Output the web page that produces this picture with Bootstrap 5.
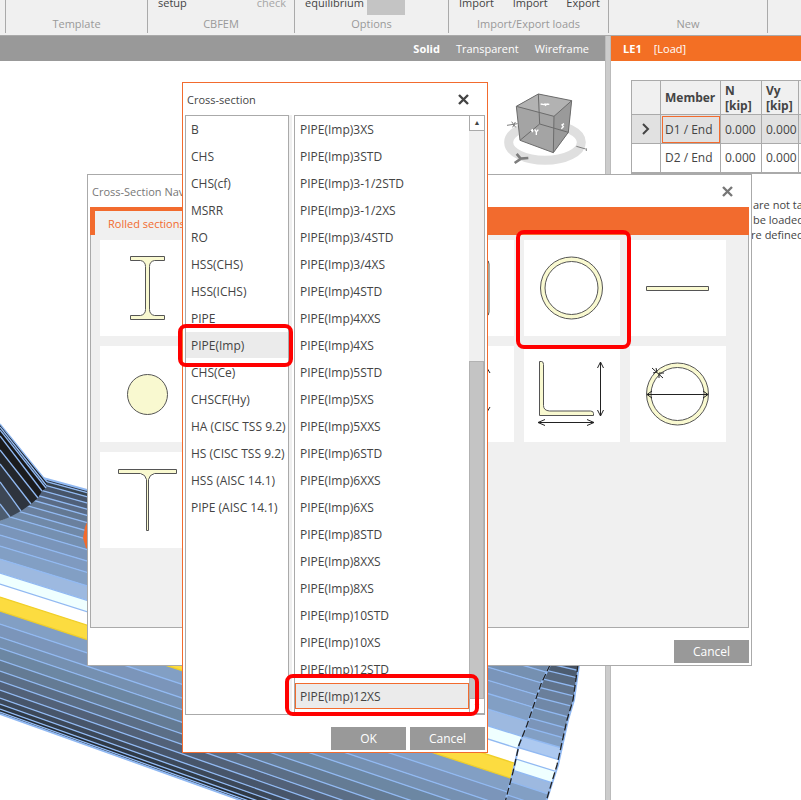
<!DOCTYPE html>
<html lang="en">
<head>
<meta charset="utf-8">
<meta name="viewport" content="width=device-width, initial-scale=1">
<title>Connection – Cross-section</title>
<link href="https://cdn.jsdelivr.net/npm/bootstrap@5.3.0/dist/css/bootstrap.min.css" rel="stylesheet">
<style>
:root{--line:#aaa;--accent:#f26b2e;--panel:#f0f0f0;--ink:#444}
body{font:12px/15px "Open Sans","Noto Sans",sans-serif;color:var(--ink);background:#fff}
button{font:inherit;color:inherit;border:0;background:none;padding:0}
svg{display:block}
.ribbon{display:grid;grid-template-columns:6fr 142fr 147fr 154fr 160fr 159fr 33fr;grid-template-rows:33px;background:var(--panel);border-bottom:1px solid var(--line);height:36px;overflow:hidden;font-size:11px}
.ribbon-group{height:33px;border-right:1px solid var(--line);display:flex;flex-direction:column;justify-content:flex-end;padding-bottom:2px;white-space:nowrap}
.ribbon-group:last-child{border:0}
.ribbon-group h2{font-size:11px;line-height:15px;margin:0;text-align:center;color:#999;font-weight:400}
.ribbon-tools{display:flex;align-items:flex-end;padding:0 8px 0 10px;margin-bottom:6px;line-height:15px}
.ribbon-tools .swatch{width:38px;height:20px;background:#c4c4c4;margin-left:3px;margin-bottom:-5px}
.ribbon-off{color:#a6a6a6}
.pane-bar{height:25px;background:#999;color:#fff;font-size:11px}
.load-bar{background:#f36f24}
.splitter{width:6px;background:#ccc;border-left:1px solid #bbb;border-right:1px solid #bbb}
.side-pane{width:190px}
.load-table{margin:19px 0 0 20px;width:198px;table-layout:fixed;border-collapse:collapse;white-space:nowrap}
.load-table th,.load-table td{border:1px solid var(--line);padding:0 4px;height:29px}
.load-table thead th{background:var(--panel);height:34px}
.load-table tbody tr:first-child{background:#e1e1e1}
.load-table tr:last-child td{border-bottom-width:2px}
.load-table .cell-on{outline:1px solid var(--accent);outline-offset:-2px}
.load-notes{margin-top:23px;padding-left:142px;white-space:nowrap;font-size:11px}
.load-notes p{margin:0}
.load-notes p:last-child{text-indent:-8px}
.win{position:absolute;background:#fff;border:1px solid var(--line)}
.win-sections{left:87px;top:174px;width:665px;padding:0 2px 2px}
.win-pick{left:182px;top:82px;width:306px;border-color:var(--accent);padding:0 2px 2px}
.win-title{height:32px;padding:0 16px 0 2px}
.win-sections .win-title{color:#777}
.win h1{font-size:11px;line-height:15px;font-weight:400;margin:0}
.tab-strip{background:var(--accent);height:28px;padding:4px 0 0 5px;font-size:11px}
.tab-strip button{background:var(--panel);color:var(--accent);height:24px;padding:0 13px}
.tile-panel{background:var(--panel);border:1px solid var(--line);border-top:0;height:393px;padding:5px 9px;display:grid;grid-template-columns:repeat(6,96px);grid-auto-rows:96px;gap:10px}
.tile{background:#fff}
.tile svg{fill:#f9f9d0;stroke:#555;stroke-width:1}
.tile .dim{fill:none;stroke:#222}
.cmd{background:#999;color:#fff;width:75px;height:23px;font-size:12px}
.lists{gap:5px;background:linear-gradient(var(--panel),var(--panel)) 104px 0/3px 100% no-repeat}
.pick-box{border:1px solid var(--line);height:600px;background:#fff}
.pick-series{width:104px}
.pick-box .list-group-item{border:1px solid transparent;padding:0 4px;height:26px;margin-bottom:1px;color:var(--ink);background:none;text-align:left;white-space:nowrap;width:100%}
.pick-box .list-group-item.on{background:#ebebeb}
.pick-size .list-group-item.on{border-color:var(--accent)}
.bar-track{width:15px;background:var(--panel)}
.bar-track button{height:15px;background:#fff;border:1px solid var(--line);border-width:0 0 1px 1px;font-size:7px;line-height:10px}
.bar-thumb{height:338px;background:#c4c4c4;border:1px solid #b2b2b2}
.mark-box{position:absolute;border:4px solid #f00;border-radius:8px;pointer-events:none}
.mark-series{left:178px;top:324px;width:115px;height:43px}
.mark-tile{left:516px;top:230px;width:115px;height:119px}
.mark-size{left:285px;top:674px;width:194px;height:42px}
</style>
<script src="https://cdn.jsdelivr.net/npm/bootstrap@5.3.0/dist/js/bootstrap.bundle.min.js"></script>
</head>
<body class="position-relative vh-100 overflow-hidden d-flex flex-column">
<header class="ribbon flex-shrink-0">
  <div class="ribbon-group"></div>
  <div class="ribbon-group"><h2>Template</h2></div>
  <div class="ribbon-group"><div class="ribbon-tools justify-content-between"><button>setup</button><button class="ribbon-off">check</button></div><h2>CBFEM</h2></div>
  <div class="ribbon-group"><div class="ribbon-tools"><button>equilibrium</button><span class="swatch"></span></div><h2>Options</h2></div>
  <div class="ribbon-group"><div class="ribbon-tools justify-content-between"><button>Import</button><button>Import</button><button>Export</button></div><h2>Import/Export loads</h2></div>
  <div class="ribbon-group"><h2>New</h2></div>
  <div class="ribbon-group"></div>
</header>
<main class="d-flex flex-grow-1 overflow-hidden">
  <section class="flex-grow-1 overflow-hidden">
    <nav class="pane-bar d-flex justify-content-end align-items-center gap-3 pe-3">
      <button class="fw-bold">Solid</button><button>Transparent</button><button>Wireframe</button>
    </nav>
    <svg id="scene" class="w-100" viewBox="0 61 605 739" role="img" aria-label="3D model">
      <defs>
        <clipPath id="body"><path d="M46 487 43 478 87 490 560 620 550 665 541 684 527 725 519 745 513 772 503 810 268 810 190 782 0 714V521L10 516Z"/></clipPath>
        <clipPath id="rim"><path d="M560 620H587L579 665 574 700 568 720 558 765 545 805H503L513 772 519 745 527 725 541 684 550 665Z"/></clipPath>
      </defs>
      <g id="bodyBands" clip-path="url(#body)"></g>
      <g id="rimBands" clip-path="url(#rim)"></g>
      <g fill="none">
        <path d="M43 478 87 490M0 714 190 782 268 810M579 665 574 700 568 720 558 765 545 805" stroke="#91b9f2" stroke-width="2"/>
        <path d="M550 665 541 684 527 725 519 745 513 772 503 810" stroke="#91b9f2" stroke-width="2"/>
        <path d="M550 665 541 684 527 725 519 745 513 772 503 810M578 665 573 700 567 720 557 765 545 805" stroke="#222" stroke-width="1.3" stroke-dasharray="7 3"/>
      </g>
      <g id="branch"></g>
      <path d="M88 520 85 527 83 538 86 548 88 549Z" fill="#f26b2e"/>
      <g transform="translate(495 80) scale(.3333)">
        <ellipse cx="150" cy="187" rx="109" ry="54" fill="none" stroke="#dfdfdf" stroke-width="27"/>
        <path d="M130 42 230 62 220 157 175 218 75 181 64 79Z" fill="#a4a4a4"/>
        <path d="M130 42 230 62 177 109 64 79Z" fill="#b2b2b2"/>
        <path d="M177 109 230 62 220 157 175 218Z" fill="#9a9a9a"/>
        <path d="M130 42 230 62 220 157 175 218 75 181 64 79ZM64 79 177 109 230 62M177 109 175 218M130 42 134 132 75 181M134 132 220 157" fill="none" stroke="#6b6b6b" stroke-width="3"/>
        <path d="M137 72l10 2 5-3M150 77l6-5 7 1M112 147v10M108 151l7 2M119 148l5 8 6-7M124 156v9M207 131l-6 4 4 5-6 6" fill="none" stroke="#fff" stroke-width="4"/>
        <path d="M36 136 68 131M50 125 62 142M61 126 53 142" stroke="#7d7d7d" stroke-width="3"/>
        <path d="M65 222 77 236 100 234M78 236 59 249" fill="none" stroke="#7d7d7d" stroke-width="8"/>
        <path d="M244 199 272 207M274 205v8" stroke="#7d7d7d" stroke-width="3"/>
      </g>
    </svg>
  </section>
  <div class="splitter flex-shrink-0"></div>
  <aside class="side-pane flex-shrink-0 overflow-hidden">
    <div class="pane-bar load-bar d-flex align-items-center gap-2 ps-2"><b class="ms-1">LE1</b><span class="ms-1">[Load]</span></div>
    <table class="load-table">
      <colgroup><col style="width:29px"><col style="width:60px"><col style="width:41px"><col style="width:37px"><col></colgroup>
      <thead><tr><th></th><th>Member</th><th>N<br>[kip]</th><th>Vy<br>[kip]</th><th></th></tr></thead>
      <tbody>
        <tr><td><svg class="mx-auto" width="8" height="12" fill="none" stroke="#444" stroke-width="2"><path d="M1 1 6 6 1 11"/></svg></td><td class="cell-on">D1 / End</td><td>0.000</td><td>0.000</td><td></td></tr>
        <tr><td></td><td>D2 / End</td><td>0.000</td><td>0.000</td><td></td></tr>
      </tbody>
    </table>
    <div class="load-notes"><p>are not taken</p><p>be loaded</p><p>are defined</p></div>
  </aside>
</main>

<section class="win win-sections">
  <div class="win-title d-flex justify-content-between align-items-center"><h1>Cross-Section Navigator</h1>
    <button aria-label="Close"><svg width="11" height="11" stroke="#777" stroke-width="2.4"><path d="M1 1 10 10M10 1 1 10"/></svg></button></div>
  <div class="tab-strip"><button>Rolled sections</button></div>
  <div class="tile-panel">
    <button class="tile" aria-label="I section"><svg width="96" height="96"><path d="M30.500 16.500h34v4h-10q-5 1-5 6v43q0 5 5 6h10v4h-34v-4h10q5-1 5-6v-43q0-5-5-6h-10Z" transform="translate(0 0)"/></svg></button>
    <button class="tile" aria-label="Channel"></button>
    <button class="tile" aria-label="Angle"></button>
    <button class="tile" aria-label="Rectangular tube"><svg width="96" height="96"><path fill-rule="evenodd" d="M28 20H68Q71 20 71 24V72Q71 76 68 76H28Q25 76 25 72V24Q25 20 28 20ZM30 24H66V72H30Z"/></svg></button>
    <button class="tile" aria-label="Pipe"><svg width="96" height="96"><circle cx="47.500" cy="48" r="31"/><circle cx="47.500" cy="48" r="26.500" fill="#fff"/></svg></button>
    <button class="tile" aria-label="Plate"><svg width="96" height="96"><path d="M16.500 46.500h62v4h-62Z" fill="#f9f9d0"/></svg></button>
    <button class="tile" aria-label="Round bar"><svg width="96" height="96"><circle cx="47.500" cy="48.500" r="20"/></svg></button>
    <button class="tile" aria-label="Rectangular bar"></button>
    <button class="tile" aria-label="Channel with sizes"></button>
    <button class="tile" aria-label="Tube with sizes"><svg width="96" height="96"><path class="dim" d="M69 22V66M66 27 69 22 72 27M66 61 69 66 72 61"/></svg></button>
    <button class="tile" aria-label="Angle with sizes"><svg width="96" height="96"><path d="M15.500 15.500h2q2 0 2 3v41q0 5 6 5.500h41q3 0 3 2.500v2h-54Z"/><path class="dim" d="M76.500 16V70M73.500 22 76.500 16 79.500 22M73.500 64 76.500 70 79.500 64M14 76.500H70M21 73.500 14 76.500 21 79.500M63 73.500 70 76.500 63 79.500"/></svg></button>
    <button class="tile" aria-label="Pipe with sizes"><svg width="96" height="96"><circle cx="47.500" cy="48" r="31"/><circle cx="47.500" cy="48" r="26.500" fill="#fff"/><path class="dim" d="M17 48.500H78M22 45 17 48.500 22 52M73 45 78 48.500 73 52M22 22 33 32M23 27 27 26 26 22M29 32V27H34"/></svg></button>
    <button class="tile" aria-label="T section"><svg width="96" height="96"><path d="M18.500 17.500h58v4h-22q-5 1-6 6v51h-2v-51q-1-5-6-6h-22Z"/></svg></button>
  </div>
  <div class="d-flex justify-content-end mt-2 pt-1"><button class="cmd">Cancel</button></div>
</section>

<section class="win win-pick" role="dialog" aria-label="Cross-section">
  <div class="win-title d-flex justify-content-between align-items-center"><h1>Cross-section</h1>
    <button aria-label="Close"><svg width="11" height="11" stroke="#444" stroke-width="2.400"><path d="M1 1 10 10M10 1 1 10"/></svg></button></div>
  <div class="lists d-flex">
    <div class="pick-box pick-series"><div class="list-group rounded-0" id="series"></div></div>
    <div class="pick-box pick-size flex-grow-1 d-flex">
      <div class="list-group rounded-0 flex-grow-1" id="sizes"></div>
      <div class="bar-track d-flex flex-column">
        <button aria-label="Scroll up">▲</button><div class="bar-thumb mt-auto"></div><button aria-label="Scroll down">▼</button>
      </div>
    </div>
  </div>
  <div class="d-flex justify-content-end gap-1 mt-2 pt-1"><button class="cmd">OK</button><button class="cmd">Cancel</button></div>
</section>
<div class="mark-box mark-series"></div>
<div class="mark-box mark-tile"></div>
<div class="mark-box mark-size"></div>

<script>
// Pick lists
const fill = (id, names, on) => {
  document.getElementById(id).innerHTML = names.map(n =>
    `<button class="list-group-item${n === on ? ' on' : ''}">${n}</button>`).join('');
};
fill('series', ['B','CHS','CHS(cf)','MSRR','RO','HSS(CHS)','HSS(ICHS)','PIPE','PIPE(Imp)','CHS(Ce)','CHSCF(Hy)',
  'HA (CISC TSS 9.2)','HS (CISC TSS 9.2)','HSS (AISC 14.1)','PIPE (AISC 14.1)'], 'PIPE(Imp)');
fill('sizes', ['3XS','3STD','3-1/2STD','3-1/2XS','3/4STD','3/4XS','4STD','4XXS','4XS','5STD','5XS','5XXS','6STD',
  '6XXS','6XS','8STD','8XXS','8XS','10STD','10XS','12STD','12XS'].map(s => 'PIPE(Imp)' + s), 'PIPE(Imp)12XS');

// Shaded facets of the pipe: [y at the left edge, facet colour]
const edge = '#91b9f2';
const body = [[466,'#2b3442'],[469,'#38444f'],[473,'#465469'],[479,'#506079'],[485,'#5a6b85'],[491,'#637893'],[498,'#6a809e'],
  [506,'#7089a8'],[514,'#7590b1'],[524,'#7a95ba'],[535,'#7f9ac0'],[546,'#829fc4'],[559,'#9db9e0'],[573,'#efffff'],
  [584,'#ffffff'],[597,'#fcdc40'],[611,'#829fc4'],[624,'#7b95ba'],[637,'#7590b1'],[648,'#6c87a3'],[660,'#647b94'],
  [671,'#5b6e86'],[681,'#526178'],[690,'#47556a'],[698,'#3c4859'],[704,'#303a46'],[709,'#222a33'],[712,'#111'],[715,'#111']];
const slope = y => y < 597 ? .27 + (y - 466) / 131 * .053 : .323 + (y - 597) / 117 * .035;
const W = 605;
let out = '';
for (let i = 0; i < body.length - 1; i++) {
  const [a, c] = body[i], b = body[i + 1][0];
  out += `<path d="M0 ${a} L${W} ${a + slope(a) * W} V${b + slope(b) * W} L0 ${b}Z" fill="${c}"/>`;
}
body.forEach(([a]) => {
  out += `<path d="M0 ${a} L${W} ${a + slope(a) * W}" stroke="${a === 597 || a === 611 ? '#f0cf28' : edge}" stroke-width="1.3"/>`;
});
document.getElementById('bodyBands').innerHTML = out;

// Facets of the cut end: [y at x = 490, facet colour]
const rim = [[634,'#3c4859'],[643,'#434f60'],[650,'#4c5c70'],[657,'#576980'],[666,'#61748d'],[675,'#6a7f9b'],[685,'#7088a8'],
  [696,'#7590b1'],[707,'#7b95ba'],[717,'#829fc4'],[727,'#adc9f0'],[739,'#fff'],[751,'#efffff'],[763,'#9db9e0'],
  [775,'#829fc4'],[789,'#7b95ba'],[804,'#7b95ba']];
out = '';
for (let i = 0; i < rim.length - 1; i++) {
  const [a, c] = rim[i], b = rim[i + 1][0], g = .22 + (a - 634) / 1300;
  out += `<path d="M490 ${a} L595 ${a + 105 * g} V${b + 40} L490 ${b + 15}Z" fill="${c}"/>` +
    `<path d="M490 ${a} L595 ${a + 105 * g}" stroke="${edge}" stroke-width="1.3"/>`;
}
document.getElementById('rimBands').innerHTML = out;

// Branch pipe in the shade
const br = [[424,47,482,'#151515'],[427,46,485,'#151515'],[430,46,488,'#181818'],[436,42,491,'#1b1c1e'],[450,38,498,'#23262b'],
  [464,31,504,'#2e343e'],[482,21,511,'#3d4755'],[504,10,517,'#4c5c70'],[521,0,521,'#4c5c70']];
out = '';
for (let i = 0; i < br.length - 1; i++) {
  const a = br[i], b = br[i + 1];
  out += `<path d="M0 ${a[0]} L${a[1]} ${a[2]} L${b[1]} ${b[2]} L0 ${b[0]}Z" fill="${a[3]}"/>` +
    `<path d="M0 ${a[0]} L${a[1]} ${a[2]}" stroke="${edge}" stroke-width="1.3"/>`;
}
document.getElementById('branch').innerHTML = out;
</script>
</body>
</html>
